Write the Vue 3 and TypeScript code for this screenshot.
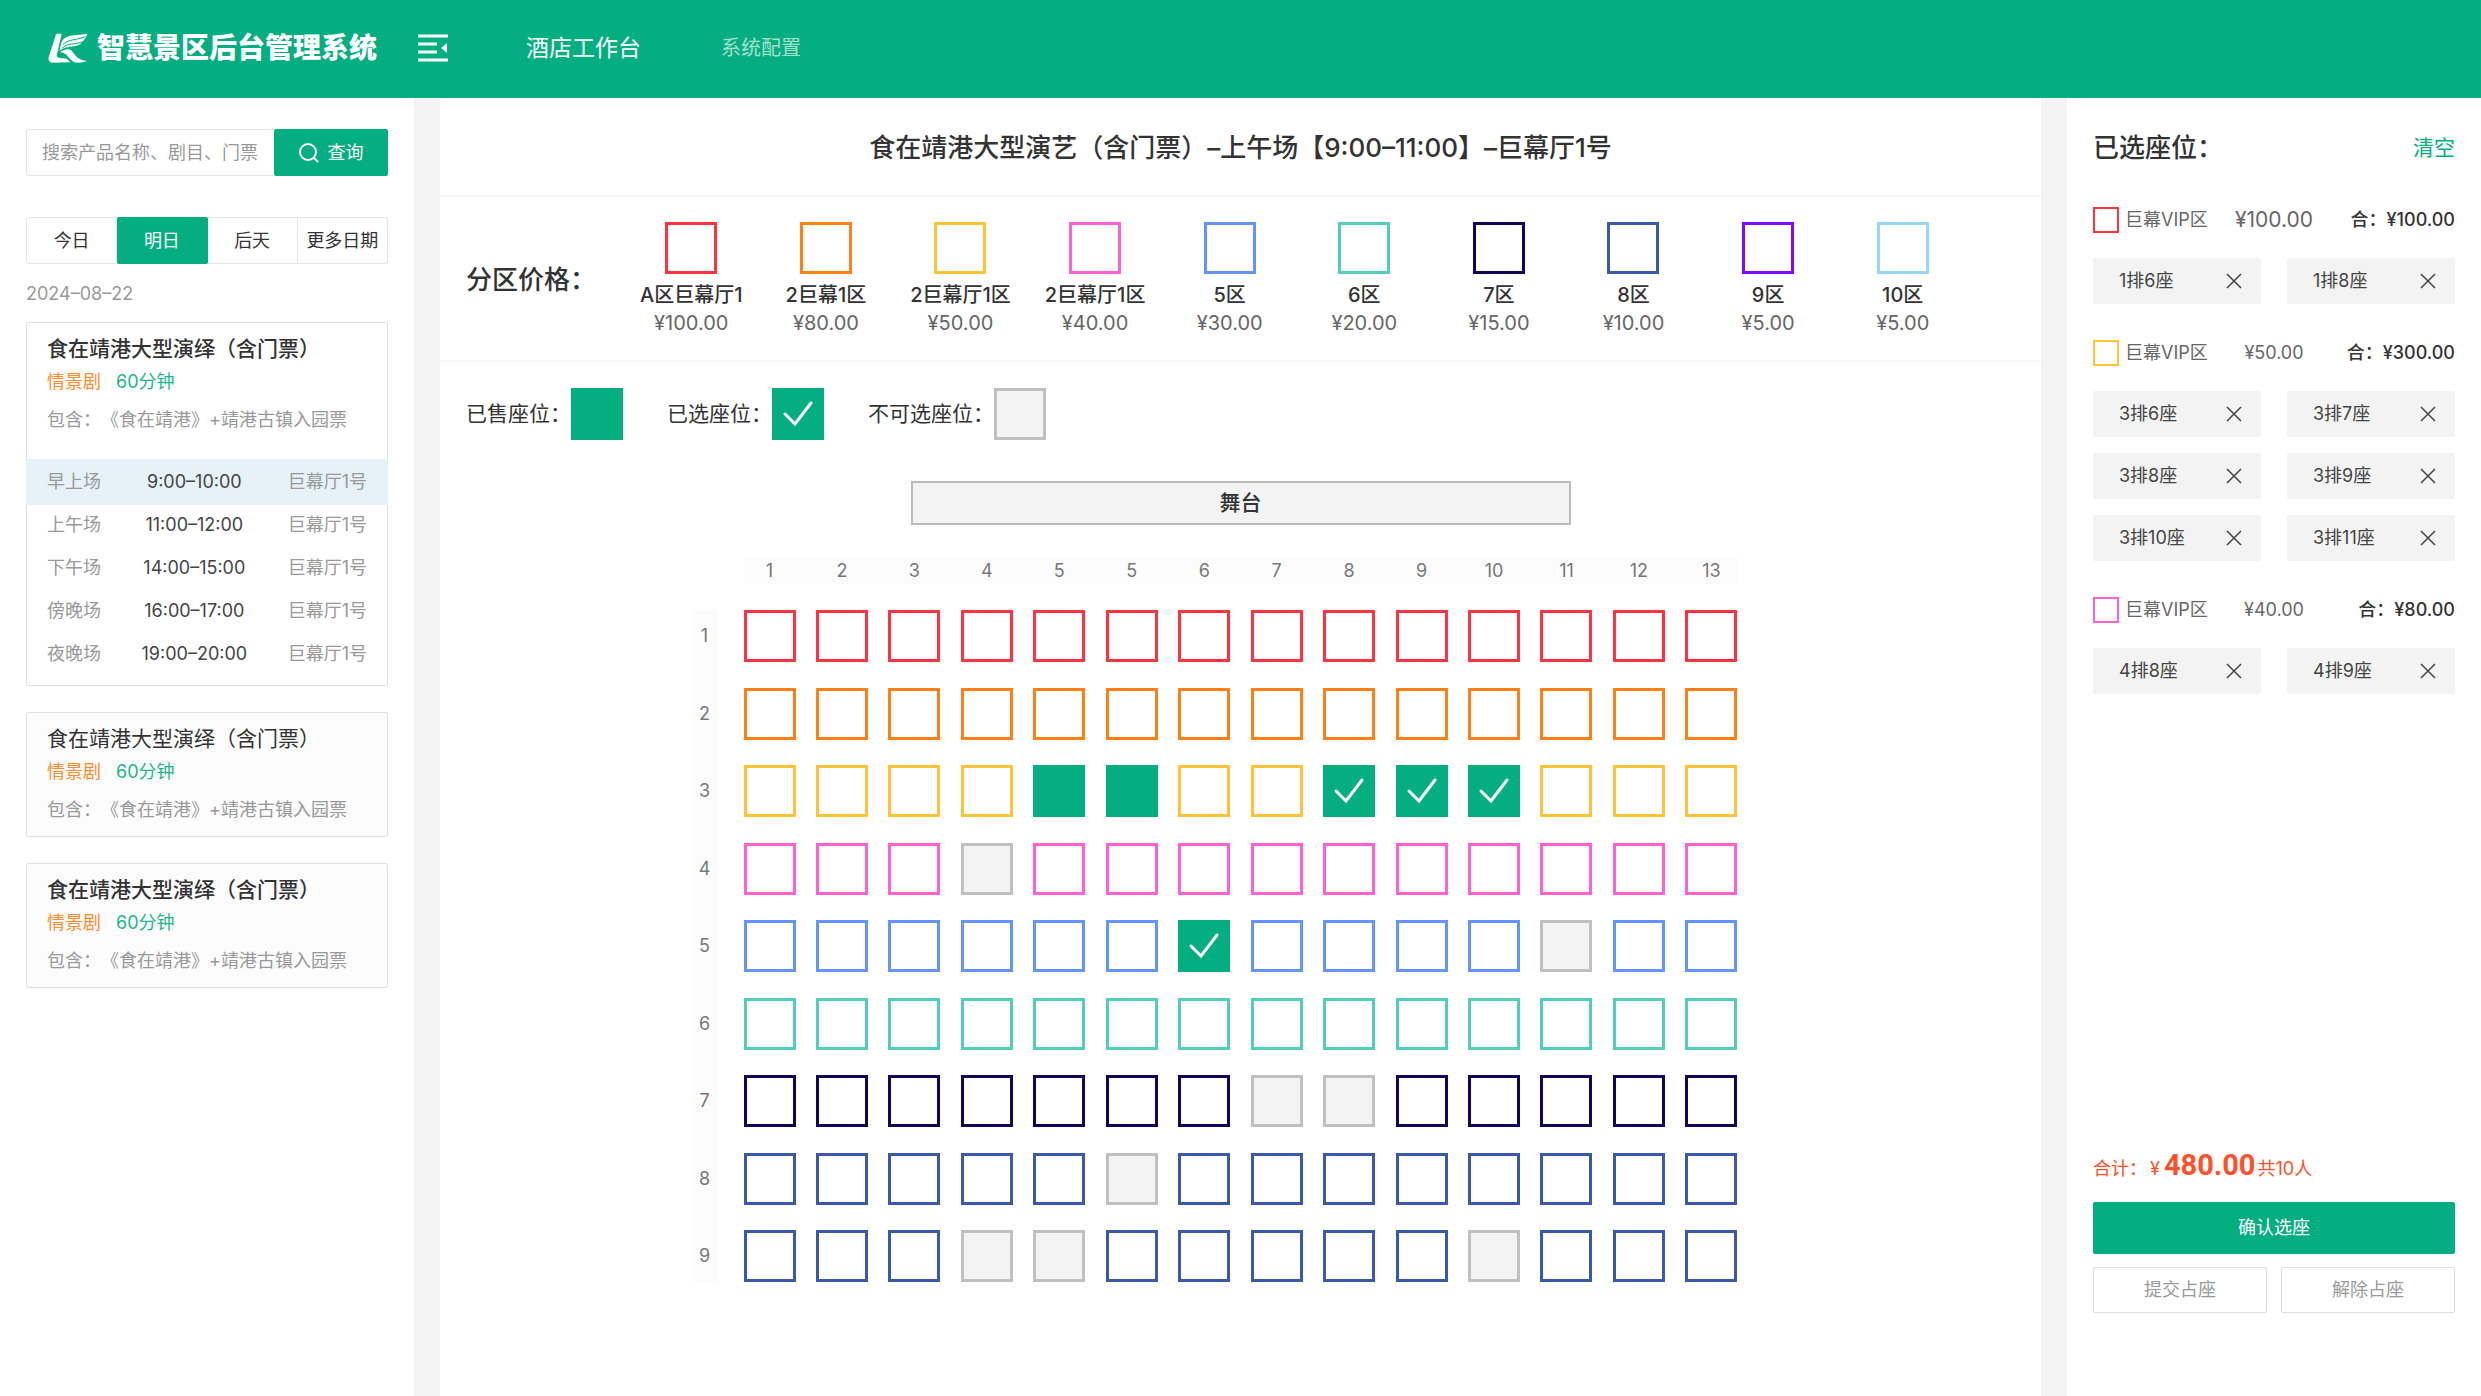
<script setup lang="ts">
import { ref } from 'vue'

type SeatState = 'free' | 'sold' | 'picked' | 'blocked'

interface Zone { name: string; price: string; color: string }
interface Session { name: string; time: string; hall: string }
interface PickedGroup { color: string; price: string; total: string; large?: boolean; seats: string[] }

const keyword = ref('')
const days = ['今日', '明日', '后天', '更多日期']
const activeDay = ref(1)

const sessions: Session[] = [
  { name: '早上场', time: '9:00–10:00', hall: '巨幕厅1号' },
  { name: '上午场', time: '11:00–12:00', hall: '巨幕厅1号' },
  { name: '下午场', time: '14:00–15:00', hall: '巨幕厅1号' },
  { name: '傍晚场', time: '16:00–17:00', hall: '巨幕厅1号' },
  { name: '夜晚场', time: '19:00–20:00', hall: '巨幕厅1号' },
]
const activeSession = ref(0)

const shows = [
  { strong: true, sessions },
  { strong: false, sessions: [] as Session[] },
  { strong: true, sessions: [] as Session[] },
]

const zones: Zone[] = [
  { name: 'A区巨幕厅1', price: '¥100.00', color: '#fd3440' },
  { name: '2巨幕1区', price: '¥80.00', color: '#ff8014' },
  { name: '2巨幕厅1区', price: '¥50.00', color: '#ffc338' },
  { name: '2巨幕厅1区', price: '¥40.00', color: '#ff60d4' },
  { name: '5区', price: '¥30.00', color: '#6593ff' },
  { name: '6区', price: '¥20.00', color: '#50cebb' },
  { name: '7区', price: '¥15.00', color: '#0f055a' },
  { name: '8区', price: '¥10.00', color: '#3a58ac' },
  { name: '9区', price: '¥5.00', color: '#8409ff' },
  { name: '10区', price: '¥5.00', color: '#96d6ff' },
]

const columnLabels = [1, 2, 3, 4, 5, 5, 6, 7, 8, 9, 10, 11, 12, 13]
const rowColors = [0, 1, 2, 3, 4, 5, 6, 7, 7].map((i) => zones[i].color)

// One character per seat: "." free, "s" sold, "p" picked, "x" blocked
const plan = [
  '..............',
  '..............',
  '....ss..ppp...',
  '...x..........',
  '......p....x..',
  '..............',
  '.......xx.....',
  '.....x........',
  '...xx.....x...',
]
const states: Record<string, SeatState> = { '.': 'free', s: 'sold', p: 'picked', x: 'blocked' }
const seats = ref<SeatState[][]>(plan.map((row) => [...row].map((c) => states[c])))

function toggleSeat(r: number, c: number) {
  const state = seats.value[r][c]
  if (state === 'free') seats.value[r][c] = 'picked'
  else if (state === 'picked') seats.value[r][c] = 'free'
}

const groups = ref<PickedGroup[]>([
  { color: zones[0].color, price: '¥100.00', total: '¥100.00', large: true, seats: ['1排6座', '1排8座'] },
  {
    color: zones[2].color,
    price: '¥50.00',
    total: '¥300.00',
    seats: ['3排6座', '3排7座', '3排8座', '3排9座', '3排10座', '3排11座'],
  },
  { color: zones[3].color, price: '¥40.00', total: '¥80.00', seats: ['4排8座', '4排9座'] },
])
</script>

<template>
  <div class="page">
    <header class="topbar">
      <div class="brand">
        <svg class="logo" viewBox="36 40 120 90" aria-hidden="true">
          <path fill="#fff" d="M60 44Q61 42 64 42H77L63 104Q61 112 68 114L92 117 103 128 50 129Q35 128 38 113Z" />
          <path fill="#fff" d="M155 42C128 48 84 40 76 70L70 94C82 84 96 82 114 80 136 77 144 62 155 42Z" />
          <path fill="#fff" d="M72 97C84 88 100 86 106 92L120 110Q132 122 154 124 128 133 112 126 104 121 92 106 84 98 72 97Z" />
          <path fill="none" stroke="#04ae80" stroke-width="3" d="M80 76C94 58 122 62 148 51M78 86C96 68 116 76 142 66" />
        </svg>
        <span class="brand-name">智慧景区后台管理系统</span>
      </div>
      <button class="fold" type="button" aria-label="收起菜单">
        <svg viewBox="0 0 30 28" aria-hidden="true">
          <path stroke="#fff" stroke-width="3" d="M0 2H30M0 10H19M0 18H19M0 26H30" />
          <path fill="#fff" d="M29 9V19L23 14Z" />
        </svg>
      </button>
      <nav class="nav">
        <a href="#" class="nav-main">酒店工作台</a>
        <a href="#" class="nav-sub">系统配置</a>
      </nav>
    </header>

    <div class="body">
      <aside class="side">
        <form class="search" @submit.prevent>
          <input v-model="keyword" type="text" aria-label="搜索产品" placeholder="搜索产品名称、剧目、门票" />
          <button type="submit">
            <svg viewBox="0 0 20 20" aria-hidden="true">
              <circle cx="9" cy="9" r="8" fill="none" stroke="#fff" stroke-width="2" />
              <path stroke="#fff" stroke-width="2" d="M15 15L19 19" />
            </svg>
            查询
          </button>
        </form>

        <div class="days">
          <button
            v-for="(day, i) in days"
            :key="day"
            type="button"
            :class="{ active: i === activeDay }"
            @click="activeDay = i"
          >{{ day }}</button>
        </div>
        <p class="date">2024–08–22</p>

        <article v-for="(show, i) in shows" :key="i" class="show" :class="{ open: show.sessions.length }">
          <h2 :class="{ strong: show.strong }">食在靖港大型演绎（含门票）</h2>
          <p class="tags"><span class="kind">情景剧</span><span class="length">60分钟</span></p>
          <p class="include">包含：《食在靖港》+靖港古镇入园票</p>
          <div v-if="show.sessions.length" class="sessions">
            <button
              v-for="(s, j) in show.sessions"
              :key="s.name"
              type="button"
              :class="{ active: j === activeSession }"
              @click="activeSession = j"
            >
              <span>{{ s.name }}</span><span class="time">{{ s.time }}</span><span>{{ s.hall }}</span>
            </button>
          </div>
        </article>
      </aside>

      <main class="stage-area">
        <h1>食在靖港大型演艺（含门票）–上午场【9:00–11:00】–巨幕厅1号</h1>

        <section class="prices">
          <h2>分区价格：</h2>
          <ul>
            <li v-for="(z, i) in zones" :key="i">
              <span class="box" :style="{ borderColor: z.color }"></span>
              <span class="zone-name">{{ z.name }}</span>
              <span class="zone-price">{{ z.price }}</span>
            </li>
          </ul>
        </section>

        <section class="legend">
          <div>已售座位：<span class="box sold"></span></div>
          <div>
            已选座位：<span class="box picked">
              <svg viewBox="0 0 52 52" aria-hidden="true"><path d="M13 26L23 36 39 15" /></svg>
            </span>
          </div>
          <div>不可选座位：<span class="box blocked"></span></div>
        </section>

        <div class="stage">舞台</div>

        <div class="map">
          <div class="cols"><span v-for="(n, i) in columnLabels" :key="i">{{ n }}</span></div>
          <div class="rows"><span v-for="n in seats.length" :key="n">{{ n }}</span></div>
          <div class="seats">
            <div v-for="(row, r) in seats" :key="r" class="seat-row">
              <button
                v-for="(state, c) in row"
                :key="c"
                type="button"
                class="box"
                :class="state"
                :style="state === 'free' ? { borderColor: rowColors[r] } : undefined"
                :disabled="state === 'sold' || state === 'blocked'"
                :aria-label="`${r + 1}排${columnLabels[c]}座`"
                :aria-pressed="state === 'picked'"
                @click="toggleSeat(r, c)"
              >
                <svg v-if="state === 'picked'" viewBox="0 0 52 52" aria-hidden="true"><path d="M13 26L23 36 39 15" /></svg>
              </button>
            </div>
          </div>
        </div>
      </main>

      <aside class="cart">
        <div class="cart-head">
          <h2>已选座位：</h2>
          <button type="button" @click="groups = []">清空</button>
        </div>

        <section v-for="(g, i) in groups" :key="i" class="group">
          <div class="group-head">
            <span class="group-name"><i :style="{ borderColor: g.color }"></i>巨幕VIP区</span>
            <span class="group-price" :class="{ large: g.large }">{{ g.price }}</span>
            <span class="group-total">合：{{ g.total }}</span>
          </div>
          <ul class="chips">
            <li v-for="(seat, j) in g.seats" :key="seat">
              {{ seat }}
              <button type="button" :aria-label="`移除${seat}`" @click="g.seats.splice(j, 1)">
                <svg viewBox="0 0 16 16" aria-hidden="true"><path d="M1 1L15 15M15 1L1 15" /></svg>
              </button>
            </li>
          </ul>
        </section>

        <footer class="checkout">
          <p class="sum">合计：<span class="yen">¥</span><strong>480.00</strong>共10人</p>
          <button type="button" class="confirm">确认选座</button>
          <div class="more">
            <button type="button">提交占座</button>
            <button type="button">解除占座</button>
          </div>
        </footer>
      </aside>
    </div>
  </div>
</template>

<style>
body {
  margin: 0;
  background: #fff;
}
</style>

<style scoped>
.page {
  display: flex;
  flex-direction: column;
  min-height: 100vh;
  font-family: Inter, "Noto Sans CJK SC", sans-serif;
  font-size: 18px;
  line-height: 28px;
  color: #333;
  text-spacing-trim: space-all;
}
.page * {
  box-sizing: border-box;
}
h1, h2, p, ul {
  margin: 0;
  padding: 0;
  font-weight: 400;
  list-style: none;
}
button, input {
  margin: 0;
  padding: 0;
  border: 0;
  background: none;
  font: inherit;
  color: inherit;
}
button {
  cursor: pointer;
}
svg {
  display: block;
}

.topbar {
  display: flex;
  align-items: center;
  height: 98px;
  padding: 0 48px 2px;
  background: #04ae80;
  color: #fff;
}
.brand {
  display: flex;
  align-items: center;
  gap: 9px;
}
.logo {
  width: 40px;
  height: 30px;
}
.brand-name {
  font-size: 28px;
  font-weight: 900;
}
.fold {
  margin-left: 41px;
}
.fold svg {
  width: 30px;
  height: 28px;
}
.nav {
  display: flex;
  align-items: center;
  gap: 80px;
  margin-left: 78px;
}
.nav a {
  color: #fff;
  text-decoration: none;
}
.nav-main {
  font-size: 23px;
}
.nav .nav-sub {
  font-size: 20px;
  color: #a5e0ce;
}

.body {
  display: flex;
  flex: 1;
}
.side {
  flex: 0 0 414px;
  min-width: 0;
  padding: 31px 26px;
}
.search {
  display: flex;
  height: 47px;
}
.search input {
  flex: 1;
  width: 0;
  min-width: 0;
  padding: 0 15px;
  border: 1px solid #e5e5e5;
  border-right: 0;
  border-radius: 3px 0 0 3px;
}
.search input::placeholder {
  color: #999;
  opacity: 1;
}
.search button {
  display: flex;
  align-items: center;
  justify-content: center;
  gap: 9px;
  width: 114px;
  border-radius: 2px;
  background: #04ae80;
  color: #fff;
}
.search svg {
  width: 20px;
  height: 20px;
}
.days {
  display: flex;
  margin-top: 41px;
}
.days button {
  flex: 1 1 0;
  height: 47px;
  border: 1px solid #e5e5e5;
  border-left-width: 0;
  white-space: nowrap;
}
.days button:first-child {
  border-left-width: 1px;
  border-radius: 3px 0 0 3px;
}
.days button:last-child {
  border-radius: 0 3px 3px 0;
}
.days .active {
  border-color: #04ae80;
  border-radius: 2px;
  background: #04ae80;
  color: #fff;
}
.date {
  margin: 16px 0 14px;
  color: #999;
}
.show {
  margin-bottom: 26px;
  padding: 10px 0 5px;
  border: 1px solid #e0e0e0;
  border-radius: 2px;
  background: #fcfcfc;
}
.show.open {
  padding-bottom: 10px;
  background: #fff;
}
.show h2, .show p {
  padding: 0 20px;
}
.show h2 {
  font-size: 21px;
  line-height: 32px;
}
.show h2.strong {
  font-weight: 500;
}
.tags {
  display: flex;
  gap: 15px;
  line-height: 34px;
}
.kind {
  color: #ff8c2e;
}
.length {
  color: #1cb68c;
}
.include {
  line-height: 42px;
  color: #999;
  white-space: nowrap;
}
.sessions {
  margin: 18px -1px 0;
}
.sessions button {
  display: flex;
  align-items: center;
  justify-content: space-between;
  width: 100%;
  height: 43px;
  padding: 0 21px;
  color: #999;
}
.sessions .active {
  height: 46px;
  margin-bottom: -2px;
  background: #e6f1f8;
}
.sessions .time {
  color: #444;
}

.stage-area {
  flex: 1;
  min-width: 0;
  border: solid #f3f3f3;
  border-width: 0 26px;
}
.stage-area h1 {
  padding-top: 2px;
  border-bottom: 2px solid #f7f7f7;
  font-size: 26px;
  font-weight: 500;
  line-height: 95px;
  text-align: center;
}
.prices {
  display: flex;
  align-items: center;
  padding: 25px 71px 23px 26px;
  border-bottom: 2px solid #f7f7f7;
}
.prices h2 {
  flex: 0 0 158px;
  font-size: 26px;
  font-weight: 500;
}
.prices ul {
  display: grid;
  grid-template-columns: repeat(10, 1fr);
  flex: 1;
}
.prices li {
  display: flex;
  flex-direction: column;
  align-items: center;
  font-size: 20px;
  white-space: nowrap;
}
.zone-name {
  margin-top: 7px;
  font-weight: 500;
}
.zone-price {
  color: #666;
}
.box {
  display: block;
  width: 52px;
  height: 52px;
  border: 3px solid #bbb;
}
.box.sold, .box.picked {
  border: 0;
  background: #04ae80;
}
.box.blocked {
  border-color: #c0c0c0;
  background: #f3f3f3;
}
.box path {
  fill: none;
  stroke: #fff;
  stroke-width: 3;
  stroke-linecap: round;
}
.legend {
  display: flex;
  gap: 44px;
  padding: 26px 26px 0;
  font-size: 21px;
}
.legend div {
  display: flex;
  align-items: center;
}
.stage {
  width: 660px;
  margin: 41px auto 0;
  border: 2px solid #bbb;
  background: #f3f3f3;
  font-size: 21px;
  font-weight: 500;
  line-height: 40px;
  text-align: center;
}
.map {
  display: grid;
  grid-template-columns: 26px minmax(0, 994px) 26px;
  gap: 26px;
  justify-content: center;
  margin-top: 33px;
  color: #777;
}
.cols {
  display: flex;
  justify-content: space-between;
  grid-column: 2;
  background: #fcfcfc;
  line-height: 26px;
  text-align: center;
}
.cols span {
  width: 52px;
}
.rows, .seats {
  display: flex;
  flex-direction: column;
  justify-content: space-between;
  min-height: 672px;
}
.rows {
  grid-column: 1;
  background: #fcfcfc;
  line-height: 52px;
  text-align: center;
}
.seat-row {
  display: flex;
  justify-content: space-between;
}

.cart {
  display: flex;
  flex-direction: column;
  flex: 0 0 414px;
  padding: 0 26px 83px;
}
.cart-head {
  display: flex;
  align-items: center;
  justify-content: space-between;
  height: 98px;
  margin-bottom: 10px;
  padding-top: 2px;
}
.cart-head h2 {
  font-size: 26px;
  font-weight: 500;
}
.cart-head button {
  font-size: 21px;
  color: #04ae80;
}
.group {
  margin-bottom: 35px;
}
.group-head {
  display: grid;
  grid-template-columns: 1fr auto 1fr;
  align-items: center;
  height: 26px;
  margin-bottom: 26px;
  white-space: nowrap;
}
.group-name {
  display: flex;
  align-items: center;
  gap: 6px;
  color: #666;
}
.group-name i {
  width: 26px;
  height: 26px;
  border: 2px solid;
}
.group-price {
  color: #666;
}
.group-price.large {
  font-size: 21px;
}
.group-total {
  font-weight: 500;
  text-align: right;
}
.chips {
  display: grid;
  grid-template-columns: 1fr 1fr;
  gap: 16px 26px;
}
.chips li {
  display: flex;
  align-items: center;
  justify-content: space-between;
  height: 46px;
  padding: 0 19px 0 26px;
  border-radius: 2px;
  background: #f3f3f3;
  color: #444;
}
.chips svg {
  width: 16px;
  height: 16px;
}
.chips path {
  stroke: #444;
  stroke-width: 1.5;
}
.checkout {
  margin-top: auto;
}
.sum {
  display: flex;
  align-items: baseline;
  margin-bottom: 15px;
  line-height: 36px;
  color: #ff5029;
}
.sum .yen {
  margin: 0 4px 0 3px;
}
.sum strong {
  margin-right: 2px;
  font-family: Roboto, sans-serif;
  font-size: 29px;
  font-weight: 700;
}
.confirm {
  width: 100%;
  height: 52px;
  border-radius: 2px;
  background: #04ae80;
  color: #fff;
}
.more {
  display: flex;
  gap: 14px;
  margin-top: 13px;
}
.more button {
  flex: 1;
  height: 46px;
  border: 1px solid #ddd;
  border-radius: 2px;
  color: #999;
}
</style>
